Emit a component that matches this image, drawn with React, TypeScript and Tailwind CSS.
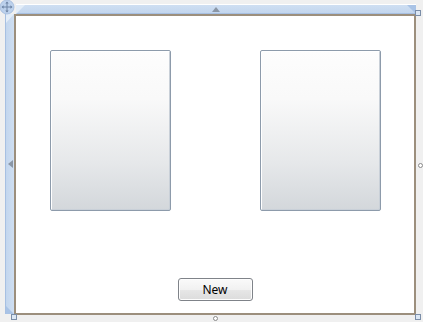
import React from "react";

function Panel() {
  return (
    <div className="w-[121px] h-[161px] rounded-[2px] border border-[#8d9bab] bg-[linear-gradient(to_bottom,#fdfdfd_0%,#f9f9f9_30%,#e6e8ea_70%,#d3d7db_100%)] shadow-[inset_1px_1px_0_#ffffff,inset_-1px_-1px_0_#c9d0d8]" />
  );
}

export default function App() {
  return (
    <div className="relative w-[423px] h-[322px] bg-[#f0f0f0] overflow-hidden" style={{ fontFamily: '"Segoe UI", "Noto Sans", "Liberation Sans", sans-serif' }}>
      <div className="flex flex-col pt-[4px]">
        {/* top bar */}
        <div className="ml-[16px] w-[400px] h-[10px] border-t border-[#ffffff] bg-[linear-gradient(to_bottom,#cfdff2,#c3d6ee)] border-b border-b-[#a7c0e2] flex items-center justify-center relative">
          <div className="absolute left-0 top-0 w-0 h-0 border-t-[9px] border-t-[#e3edf8] border-r-[9px] border-r-transparent" />
          <div className="absolute right-0 top-0 w-0 h-0 border-t-[9px] border-t-[#a9c3e6] border-l-[9px] border-l-transparent" />
          <div className="w-0 h-0 border-l-[4px] border-r-[4px] border-b-[5px] border-l-transparent border-r-transparent border-b-[#8a96a6]" />
        </div>
        <div className="flex">
          {/* left bar */}
          <div className="ml-[5px] w-[9px] h-[300px] bg-[linear-gradient(to_right,#c3d6ee,#cfdff2)] border-l border-l-[#a7c0e2] flex items-center justify-end relative">
            <div className="absolute left-0 top-0 w-0 h-0 border-t-[9px] border-t-[#e3edf8] border-r-[8px] border-r-transparent" />
            <div className="absolute left-0 bottom-0 w-0 h-0 border-b-[8px] border-b-[#a9c3e6] border-r-[8px] border-r-transparent" />
            <div className="w-0 h-0 border-t-[4px] border-b-[4px] border-r-[5px] border-t-transparent border-b-transparent border-r-[#8a96a6] mr-[1px]" />
          </div>
          {/* canvas */}
          <div className="w-[402px] h-[301px] border-2 border-[#9c8f7d] bg-white flex flex-col">
            <div className="flex justify-between pl-[34px] pr-[33px] pt-[34px]">
              <Panel />
              <Panel />
            </div>
            <div className="flex justify-center mt-[67px]">
              <button className="w-[75px] h-[23px] rounded-[3px] border border-[#7f8389] bg-[linear-gradient(to_bottom,#fafafa_0%,#f1f1f1_50%,#e6e6e6_55%,#dcdcdc_100%)] shadow-[inset_0_0_0_1px_#fdfdfd] text-[12px] text-black leading-none">
                New
              </button>
            </div>
          </div>
        </div>
      </div>

      {/* move handle */}
      <svg className="absolute left-0 top-0" width="15" height="15" viewBox="0 0 15 15">
        <circle cx="7" cy="7" r="7" fill="#bcd1ec" stroke="#9fb9dc" strokeWidth="0.8" />
        <path d="M7 2 L7 12 M2 7 L12 7" stroke="#6f86a6" strokeWidth="1" />
        <path d="M7 1.5 L5.3 3.6 L8.7 3.6 Z M7 12.5 L5.3 10.4 L8.7 10.4 Z M1.5 7 L3.6 5.3 L3.6 8.7 Z M12.5 7 L10.4 5.3 L10.4 8.7 Z" fill="#6f86a6" />
      </svg>

      {/* resize handles */}
      <div className="absolute left-[415px] top-[10px] w-[6px] h-[6px] border border-[#7b8ea8] bg-[#dce7f4]" />
      <div className="absolute left-[11px] top-[314px] w-[6px] h-[6px] border border-[#7b8ea8] bg-[#dce7f4]" />
      <div className="absolute left-[415px] top-[314px] w-[6px] h-[6px] border border-[#7b8ea8] bg-[#dce7f4]" />
      <div className="absolute left-[418px] top-[163px] w-[5px] h-[5px] rounded-full border border-[#8a8a8a] bg-white" />
      <div className="absolute left-[213px] top-[316px] w-[5px] h-[5px] rounded-full border border-[#8a8a8a] bg-white" />
    </div>
  );
}
